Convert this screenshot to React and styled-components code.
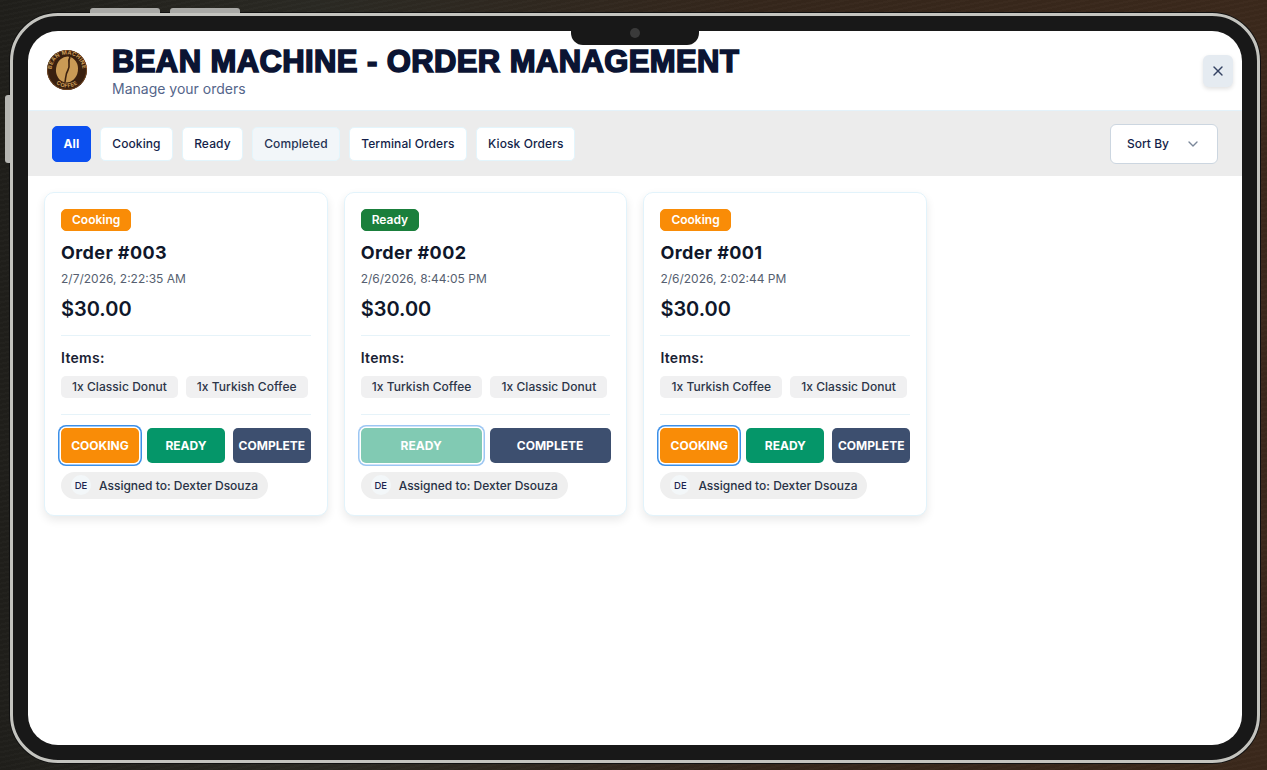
import React from "react";
import styled, { createGlobalStyle } from "styled-components";
import { X, ChevronDown } from "lucide-react";

const GlobalStyle = createGlobalStyle`
  html, body {
    margin: 0;
    height: 100%;
    overflow: hidden;
    font-family: Inter, "Liberation Sans", sans-serif;
  }
  * {
    box-sizing: border-box;
  }
`;

const Page = styled.div`
  width: 1267px;
  height: 770px;
  padding: 13px 7px 7px 10px;
  background:
    repeating-linear-gradient(168deg, rgba(255, 255, 255, 0.012) 0 2px, rgba(0, 0, 0, 0.03) 2px 5px),
    linear-gradient(90deg, #201f1b 0%, #2b2a24 25%, #36271c 60%, #3c291c 100%);
`;

const Device = styled.div`
  position: relative;
  width: 1250px;
  height: 750px;
  padding: 15px;
  background: #181818;
  border: 3px solid #c4c4bf;
  border-radius: 48px;
  box-shadow: 0 0 0 1px #111;
`;

const SideButton = styled.span`
  position: absolute;
  background: #a9a9a6;
  border-radius: 3px 3px 0 0;
  top: -8px;
  left: ${(p) => p.$left}px;
  width: 70px;
  height: 5px;
`;

const PowerButton = styled.span`
  position: absolute;
  left: -8px;
  top: 79px;
  width: 5px;
  height: 68px;
  background: #b5b5b2;
  border-radius: 3px 0 0 3px;
`;

const Notch = styled.div`
  position: absolute;
  top: 15px;
  left: 558px;
  width: 128px;
  height: 14px;
  background: #181818;
  border-radius: 0 0 12px 12px;
  z-index: 2;
  display: flex;
  justify-content: center;

  span {
    width: 10px;
    height: 10px;
    margin-top: -3px;
    border-radius: 50%;
    background: #3a3a3a;
  }
`;

const Screen = styled.div`
  height: 100%;
  background: #fff;
  border-radius: 30px;
  overflow: hidden;
  display: flex;
  flex-direction: column;
`;

const Header = styled.header`
  height: 80px;
  flex: none;
  display: flex;
  align-items: flex-start;
  padding: 18px 9px 0 18px;
  border-bottom: 1px solid #e4f2fa;
`;

const Logo = styled.svg`
  width: 42px;
  height: 42px;
  flex: none;
`;

const HeaderText = styled.div`
  margin-left: 24px;
  flex: 1;
`;

const Title = styled.h1`
  margin: 0;
  font-family: "Liberation Sans", sans-serif;
  font-size: 31px;
  line-height: 26px;
  font-weight: 700;
  color: #0b1433;
  letter-spacing: 0.4px;
  -webkit-text-stroke: 1.6px #0b1433;
  text-transform: uppercase;
  white-space: nowrap;
`;

const Subtitle = styled.p`
  margin: 4px 0 0;
  font-size: 14px;
  line-height: 20px;
  color: #54658a;
`;

const CloseButton = styled.button`
  width: 30px;
  height: 32px;
  margin-top: 6px;
  flex: none;
  display: flex;
  align-items: center;
  justify-content: center;
  padding: 0;
  border: none;
  border-radius: 6px;
  background: #e5ebf1;
  color: #344263;
  box-shadow: 0 2px 4px rgba(0, 0, 0, 0.12);
`;

const FilterBar = styled.div`
  height: 65px;
  flex: none;
  display: flex;
  align-items: center;
  gap: 9.5px;
  padding: 0 24px;
  background: #ececec;
`;

const FilterButton = styled.button`
  height: ${(p) => (p.$active ? 36 : 34)}px;
  padding: 0 ${(p) => (p.$active ? 10.5 : 11)}px;
  border: 1px solid ${(p) => (p.$active ? "#0b4ff0" : "#e3f5fc")};
  border-radius: 5px;
  background: ${(p) => (p.$active ? "#0b4ff0" : p.$muted ? "#f2f6f9" : "#fff")};
  color: ${(p) => (p.$active ? "#fff" : p.$muted ? "#263354" : "#141f4a")};
  font-family: inherit;
  font-size: 12px;
  letter-spacing: 0.1px;
  font-weight: ${(p) => (p.$active ? 700 : 500)};
  white-space: nowrap;
`;

const SortSelect = styled.button`
  margin-left: auto;
  width: 108px;
  height: 40px;
  display: flex;
  align-items: center;
  justify-content: space-between;
  padding: 0 16px;
  border: 1px solid #ccd6e0;
  border-radius: 6px;
  background: #fff;
  color: #141f4a;
  font-family: inherit;
  font-size: 12px;
  font-weight: 500;

  svg {
    color: #7a8799;
  }
`;

const CardGrid = styled.div`
  display: grid;
  grid-template-columns: repeat(4, 283.8px);
  gap: 15.9px;
  padding: 16px;
  align-items: start;
`;

const Card = styled.article`
  height: 324px;
  padding: 16px;
  background: #fff;
  border: 1px solid #e2f3fb;
  border-radius: 10px;
  box-shadow: 0 4px 10px rgba(0, 0, 0, 0.09);
  display: flex;
  flex-direction: column;
`;

const Badge = styled.span`
  align-self: flex-start;
  height: 22px;
  padding: 0 10px 1px;
  display: flex;
  align-items: center;
  border-radius: 5px;
  color: #fff;
  font-size: 12px;
  font-weight: 600;
  background: ${(p) => p.$color};
  border: 1px solid ${(p) => p.$color};
`;

const OrderTitle = styled.h2`
  margin: 11px 0 0;
  font-size: 18px;
  line-height: 22px;
  font-weight: 700;
  color: #0f172a;
  letter-spacing: 0.4px;
`;

const OrderDate = styled.div`
  margin-top: 7px;
  font-size: 12px;
  line-height: 16px;
  color: #565f70;
`;

const Price = styled.div`
  margin-top: 9px;
  font-size: 20px;
  line-height: 26px;
  font-weight: 600;
  color: #0f172a;
`;

const Divider = styled.hr`
  width: 100%;
  margin: ${(p) => p.$top}px 0 0;
  border: none;
  border-top: 1px solid #e6f3f9;
`;

const ItemsLabel = styled.div`
  margin-top: 13px;
  font-size: 14px;
  line-height: 18px;
  font-weight: 600;
  color: #1a2233;
  letter-spacing: 0.3px;
`;

const ItemList = styled.div`
  margin-top: 9px;
  display: flex;
  gap: 8px;
`;

const ItemChip = styled.span`
  height: 22px;
  padding: 0 11px 1px;
  display: flex;
  align-items: center;
  background: #f0f0f1;
  border-radius: 5px;
  font-size: 12px;
  font-weight: 500;
  letter-spacing: 0.05px;
  color: #2c3548;
  white-space: nowrap;
`;

const Actions = styled.div`
  margin-top: 13px;
  display: flex;
  gap: 8px;
`;

const ActionButton = styled.button`
  flex: 1;
  min-width: 0;
  height: 35px;
  padding: 0 0 1px;
  border: none;
  border-radius: 5px;
  background: ${(p) => p.$color};
  color: #fff;
  font-family: inherit;
  font-size: 12px;
  font-weight: 700;
  white-space: nowrap;
  opacity: ${(p) => (p.$dim ? 0.5 : 1)};
  box-shadow: ${(p) => (p.$focus ? "0 0 0 1.5px #fff, 0 0 0 3px #3b8fe8" : "none")};
`;

const Assignee = styled.div`
  align-self: flex-start;
  margin-top: 9px;
  height: 27px;
  padding: 0 10px 1px;
  display: flex;
  align-items: center;
  gap: 8px;
  background: #efefef;
  border-radius: 14px;
  font-size: 12px;
  font-weight: 500;
  color: #283246;
  white-space: nowrap;
`;

const Avatar = styled.span`
  width: 20px;
  height: 20px;
  display: flex;
  align-items: center;
  justify-content: center;
  border-radius: 50%;
  background: #f3f7f9;
  color: #1a2450;
  font-size: 9.5px;
  font-weight: 500;
`;

const orders = [
  {
    id: "003",
    status: "Cooking",
    date: "2/7/2026, 2:22:35 AM",
    items: ["1x Classic Donut", "1x Turkish Coffee"],
  },
  {
    id: "002",
    status: "Ready",
    date: "2/6/2026, 8:44:05 PM",
    items: ["1x Turkish Coffee", "1x Classic Donut"],
  },
  {
    id: "001",
    status: "Cooking",
    date: "2/6/2026, 2:02:44 PM",
    items: ["1x Turkish Coffee", "1x Classic Donut"],
  },
];

const filters = ["All", "Cooking", "Ready", "Completed", "Terminal Orders", "Kiosk Orders"];

const BeanLogo = () => (
  <Logo viewBox="0 0 42 42">
    <defs>
      <path id="logoTop" d="M5.5 21a15.5 15.5 0 0 1 31 0" />
      <path id="logoBottom" d="M3.5 21a17.5 17.5 0 0 0 35 0" />
    </defs>
    <circle cx="21" cy="21" r="20" fill="#3a200f" />
    <circle cx="21" cy="21" r="19.5" fill="none" stroke="#6d4320" strokeWidth="1" />
    <text fontSize="5.5" fontWeight="700" fill="#c99a55" fontFamily="Inter, sans-serif" letterSpacing="0.3">
      <textPath href="#logoTop" startOffset="50%" textAnchor="middle">BEAN MACHINE</textPath>
    </text>
    <text fontSize="5.5" fontWeight="700" fill="#c99a55" fontFamily="Inter, sans-serif" letterSpacing="0.3">
      <textPath href="#logoBottom" startOffset="50%" textAnchor="middle">COFFEE</textPath>
    </text>
    <ellipse cx="21" cy="20.5" rx="11" ry="13" fill="#c99a55" transform="rotate(8 21 20.5)" />
    <path d="M24 8c-3 5 1 8-2 13s-2 8-3 12" fill="none" stroke="#3a200f" strokeWidth="1.6" />
  </Logo>
);

const OrderCard = ({ order }) => {
  const isCooking = order.status === "Cooking";

  return (
    <Card>
      <Badge $color={isCooking ? "#f98c07" : "#1a7f3c"}>{order.status}</Badge>
      <OrderTitle>Order #{order.id}</OrderTitle>
      <OrderDate>{order.date}</OrderDate>
      <Price>$30.00</Price>
      <Divider $top={13} />
      <ItemsLabel>Items:</ItemsLabel>
      <ItemList>
        {order.items.map((item) => (
          <ItemChip key={item}>{item}</ItemChip>
        ))}
      </ItemList>
      <Divider $top={16} />
      <Actions>
        {isCooking ? (
          <ActionButton $color="#f98c07" $focus>COOKING</ActionButton>
        ) : null}
        <ActionButton $color="#059669" $dim={!isCooking} $focus={!isCooking}>READY</ActionButton>
        <ActionButton $color="#3d4f6f">COMPLETE</ActionButton>
      </Actions>
      <Assignee>
        <Avatar>DE</Avatar>
        Assigned to: Dexter Dsouza
      </Assignee>
    </Card>
  );
};

const App = () => {
  return (
    <Page>
      <GlobalStyle />
      <Device>
        <SideButton $left={77} />
        <SideButton $left={157} />
        <PowerButton />
        <Notch>
          <span />
        </Notch>
        <Screen>
          <Header>
            <BeanLogo />
            <HeaderText>
              <Title>Bean Machine - Order Management</Title>
              <Subtitle>Manage your orders</Subtitle>
            </HeaderText>
            <CloseButton>
              <X size={16} />
            </CloseButton>
          </Header>
          <FilterBar>
            {filters.map((f) => (
              <FilterButton key={f} $active={f === "All"} $muted={f === "Completed"}>
                {f}
              </FilterButton>
            ))}
            <SortSelect>
              Sort By
              <ChevronDown size={16} />
            </SortSelect>
          </FilterBar>
          <CardGrid>
            {orders.map((order) => (
              <OrderCard key={order.id} order={order} />
            ))}
          </CardGrid>
        </Screen>
      </Device>
    </Page>
  );
};

export default App;
